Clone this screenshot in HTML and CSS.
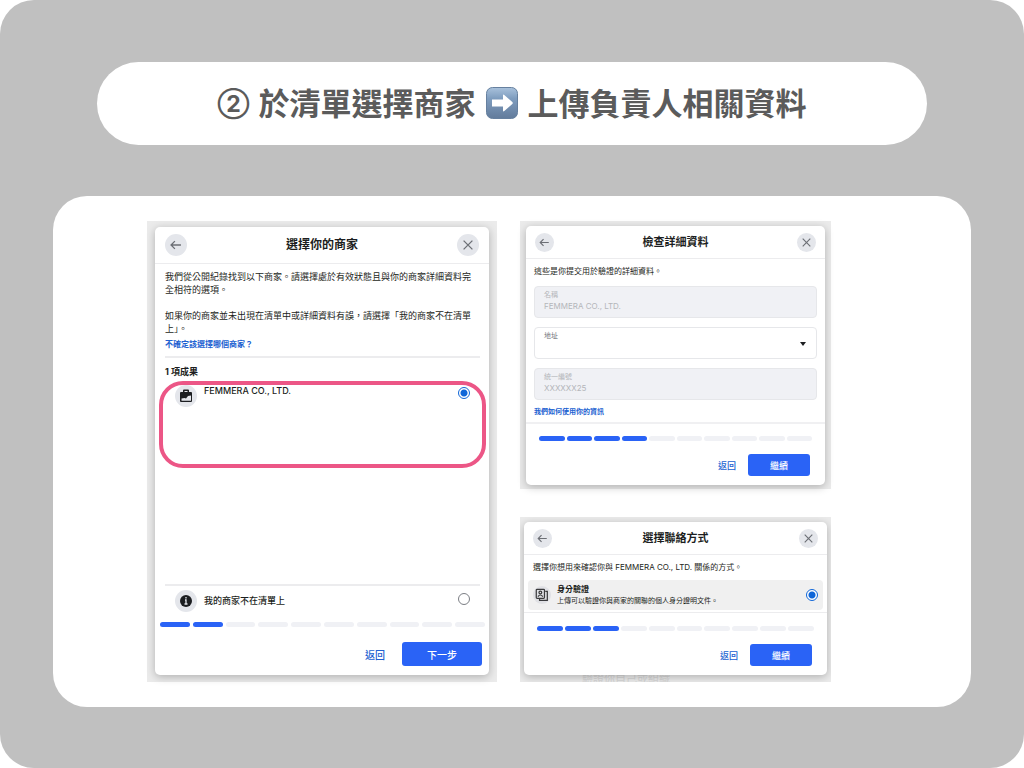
FILE: index.html
```
<!DOCTYPE html>
<html lang="zh-Hant">
<head>
    <meta charset="UTF-8">
    <meta name="viewport" content="width=device-width, initial-scale=1.0">
    <title>於清單選擇商家</title>
    <link rel="stylesheet" href="styles.css">
</head>
<body>
    <main class="slide">
        <h1 class="title">
            <span class="number">②</span> 於清單選擇商家
            <svg class="arrow" viewBox="0 0 32 32" aria-hidden="true">
                <defs>
                    <linearGradient id="blue" x1="0" y1="0" x2="0" y2="1">
                        <stop offset="0" stop-color="#a9c2dc"/>
                        <stop offset="0.35" stop-color="#7f9dbf"/>
                        <stop offset="1" stop-color="#627b9b"/>
                    </linearGradient>
                </defs>
                <rect x="0.5" y="0.5" width="31" height="31" rx="6" fill="url(#blue)" stroke="#66809f"/>
                <path d="M6 12.5h11V8.500q0-1.500 1.300-.5l8 7q1 1 0 2l-8 7q-1.300 1-1.300-.5v-4H6z" fill="#fff"/>
            </svg>
            上傳負責人相關資料
        </h1>

        <div class="board">
            <div class="shot shot-list">
                <form class="dialog">
                    <header class="dialog-head">
                        <button type="button" class="round" aria-label="返回">
                            <svg viewBox="0 0 20 20"><path d="M14.500 10H6M9 6.500L5.500 10 9 13.500"/></svg>
                        </button>
                        <h2>選擇你的商家</h2>
                        <button type="button" class="round" aria-label="關閉">
                            <svg viewBox="0 0 20 20"><path d="M6 6l8 8M14 6l-8 8"/></svg>
                        </button>
                    </header>
                    <div class="list-body">
                        <p>我們從公開紀錄找到以下商家。請選擇處於有效狀態且與你的商家詳細資料完全相符的選項。</p>
                        <p>如果你的商家並未出現在清單中或詳細資料有誤，請選擇「我的商家不在清單上」。</p>
                        <a class="help" href="#">不確定該選擇哪個商家？</a>
                        <h3>1 項成果</h3>
                        <div class="option picked">
                            <span class="badge">
                                <svg viewBox="0 0 22 22">
                                    <path d="M8 7V5.5Q8 4.500 9 4.500h4q1 0 1 1V7h2q1 0 1 1v8q0 1-1 1H6q-1 0-1-1V8q0-1 1-1zM9.500 7h3V6h-3z" fill="#1c1e21" fill-rule="evenodd"/>
                                    <path d="M6.500 15.800v-2.300l3-.5 1.500.5 2-2.500 3-.5v5.300z" fill="#e4e6eb"/>
                                </svg>
                            </span>
                            <label for="femmera">FEMMERA CO., LTD.</label>
                            <input type="radio" id="femmera" name="business" checked>
                        </div>
                        <div class="option unlisted">
                            <span class="badge">
                                <svg viewBox="0 0 22 22">
                                    <circle cx="11" cy="11" r="6" fill="#1c1e21"/>
                                    <path d="M11 7v1.500M10 10h1v4M9.500 14h3" fill="none" stroke="#e4e6eb" stroke-width="1.300"/>
                                </svg>
                            </span>
                            <label for="unlisted">我的商家不在清單上</label>
                            <input type="radio" id="unlisted" name="business">
                        </div>
                    </div>
                    <div class="steps">
                        <i class="done"></i><i class="done"></i><i></i><i></i><i></i><i></i><i></i><i></i><i></i><i></i>
                    </div>
                    <footer class="actions">
                        <button type="button" class="back">返回</button>
                        <button type="button" class="next">下一步</button>
                    </footer>
                </form>
            </div>

            <div class="side">
                <div class="shot shot-details">
                    <form class="dialog">
                        <header class="dialog-head">
                            <button type="button" class="round" aria-label="返回">
                                <svg viewBox="0 0 20 20"><path d="M14.500 10H6M9 6.500L5.500 10 9 13.500"/></svg>
                            </button>
                            <h2>檢查詳細資料</h2>
                            <button type="button" class="round" aria-label="關閉">
                                <svg viewBox="0 0 20 20"><path d="M6 6l8 8M14 6l-8 8"/></svg>
                            </button>
                        </header>
                        <div class="details-body">
                            <p>這些是你提交用於驗證的詳細資料。</p>
                            <div class="field locked">
                                <label for="name">名稱</label>
                                <input type="text" id="name" value="FEMMERA CO., LTD." disabled>
                            </div>
                            <div class="field">
                                <label for="address">地址</label>
                                <select id="address">
                                    <option></option>
                                </select>
                            </div>
                            <div class="field locked">
                                <label for="taxid">統一編號</label>
                                <input type="text" id="taxid" value="XXXXXX25" disabled>
                            </div>
                            <a href="#">我們如何使用你的資訊</a>
                        </div>
                        <div class="steps">
                            <i class="done"></i><i class="done"></i><i class="done"></i><i class="done"></i><i></i><i></i><i></i><i></i><i></i><i></i>
                        </div>
                        <footer class="actions">
                            <button type="button" class="back">返回</button>
                            <button type="button" class="next">繼續</button>
                        </footer>
                    </form>
                </div>

                <div class="shot shot-contact">
                    <form class="dialog">
                        <header class="dialog-head">
                            <button type="button" class="round" aria-label="返回">
                                <svg viewBox="0 0 20 20"><path d="M14.500 10H6M9 6.500L5.500 10 9 13.500"/></svg>
                            </button>
                            <h2>選擇聯絡方式</h2>
                            <button type="button" class="round" aria-label="關閉">
                                <svg viewBox="0 0 20 20"><path d="M6 6l8 8M14 6l-8 8"/></svg>
                            </button>
                        </header>
                        <div class="contact-body">
                            <p>選擇你想用來確認你與 FEMMERA CO., LTD. 關係的方式。</p>
                            <div class="option method">
                                <span class="badge">
                                    <svg viewBox="0 0 22 22" fill="none" stroke="#3a3b3d" stroke-width="1.500">
                                        <rect x="4" y="4" width="10" height="11" rx="1"/>
                                        <path d="M15 6.500h2.500v11H8V16"/>
                                        <circle cx="9" cy="8" r="1.700"/>
                                        <path d="M6 13q3-4 6 0"/>
                                    </svg>
                                </span>
                                <label for="identity"><b>身分驗證</b>上傳可以驗證你與商家的關聯的個人身分證明文件。</label>
                                <input type="radio" id="identity" name="method" checked>
                            </div>
                        </div>
                        <div class="steps">
                            <i class="done"></i><i class="done"></i><i class="done"></i><i></i><i></i><i></i><i></i><i></i><i></i><i></i>
                        </div>
                        <footer class="actions">
                            <button type="button" class="back">返回</button>
                            <button type="button" class="next">繼續</button>
                        </footer>
                    </form>
                    <span class="behind">驗證你自己或組織</span>
                </div>
            </div>
        </div>
    </main>
</body>
</html>
```
FILE: styles.css
```
* {
    box-sizing: border-box;
}
body {
    margin: 0;
    background-color: white;
    color: #1c1e21;
    font-family: Inter, "Noto Sans CJK TC", sans-serif;
}
h1, h2, h3, p {
    margin: 0;
}
button, input, select {
    font-family: inherit;
    margin: 0;
    padding: 0;
    border: none;
}
a {
    color: #2161d1;
    font-weight: bold;
    text-decoration: none;
}

/* slide */
.slide {
    min-height: 100vh;
    padding: 62px 53px 61px;
    border-radius: 34px;
    background-color: #c0c0c0;
    display: flex;
    flex-direction: column;
}
.title {
    margin: 0 44px 51px;
    padding: 17px 0 20px;
    border-radius: 42px;
    background-color: white;
    color: #5b5b5b;
    font-family: "Noto Sans CJK TC", sans-serif;
    font-size: 31px;
    line-height: 46px;
    text-align: center;
}
.number {
    margin-right: 2px;
    font-family: Inter, "Noto Sans CJK TC", sans-serif;
    font-size: 23px;
    line-height: 24px;
    vertical-align: 3px;
}
.arrow {
    width: 32px;
    height: 32px;
    margin: 0 3px;
    vertical-align: -4px;
}
.board {
    flex: 1;
    padding: 25px 140px 25px 94px;
    border-radius: 34px;
    background-color: white;
    display: grid;
    grid-template-columns: 350fr 311fr;
    gap: 23px;
}
.side {
    display: flex;
    flex-direction: column;
    justify-content: space-between;
    gap: 28px;
}

/* dialogs */
.shot {
    display: flex;
    background-color: #ebebeb;
}
.shot-list {
    padding: 6px 8px 7px;
}
.shot-details {
    padding: 5px 6px 4px;
}
.shot-contact {
    position: relative;
    overflow: hidden;
    padding: 5px 4px 7px;
}
.dialog {
    flex: 1;
    display: flex;
    flex-direction: column;
    border-radius: 5px;
    background-color: white;
    box-shadow: 0 2px 8px rgba(0, 0, 0, 0.25);
    z-index: 1;
}
.dialog-head {
    display: flex;
    justify-content: space-between;
    align-items: center;
    height: 33px;
    padding: 0 9px;
    border-bottom: 1px solid #ececee;
}
.dialog-head h2 {
    font-size: 11px;
    line-height: 16px;
}
.shot-list .dialog-head {
    height: 37px;
    padding: 0 10px;
}
.shot-list .dialog-head h2 {
    font-size: 12px;
}
.round {
    width: 19px;
    height: 19px;
    border-radius: 50%;
    background-color: #e4e6eb;
}
.shot-list .round {
    width: 22px;
    height: 22px;
}
.round svg {
    display: block;
    width: 100%;
    fill: none;
    stroke: #6c6f75;
    stroke-width: 1.2;
}
p {
    font-size: 8px;
    line-height: 12px;
}

/* options */
.option {
    display: flex;
    align-items: center;
}
.option label {
    flex: 1;
}
.badge {
    width: 22px;
    height: 22px;
    margin-right: 7px;
    border-radius: 50%;
    background-color: #e4e6eb;
}
.badge svg {
    display: block;
}
input[type="radio"] {
    appearance: none;
    width: 12px;
    height: 12px;
    border: 1px solid #7b7e84;
    border-radius: 50%;
    background-color: white;
}
input[type="radio"]:checked {
    border-color: #0f66d8;
    background: radial-gradient(circle, #0f66d8 3px, white 4px);
}

/* business list */
.list-body {
    flex: 1;
    display: flex;
    flex-direction: column;
    padding: 6px 9px 10px 10px;
}
.list-body p {
    margin: 0 3px 13px 0;
    font-size: 9px;
    line-height: 13px;
}
.help {
    margin-top: -10px;
    padding-bottom: 6px;
    border-bottom: 2px solid #ececee;
    font-size: 8px;
    line-height: 12px;
}
.list-body h3 {
    margin: 8px 0 3px;
    font-size: 9px;
    line-height: 12px;
}
.list-body label {
    font-size: 9px;
    font-weight: 500;
    line-height: 12px;
}
.picked {
    min-height: 87px;
    margin: 0 -6px;
    padding: 0 12px;
    border: 4px solid #ec5686;
    border-radius: 24px;
    align-items: flex-start;
}
.picked input[type="radio"] {
    margin-top: 2px;
}
.unlisted {
    margin-top: auto;
    padding: 4px 10px 0;
    border-top: 2px solid #ececee;
}
.unlisted input[type="radio"] {
    margin-bottom: 4px;
}

/* details form */
.details-body {
    padding: 6px 8px 4px;
    border-bottom: 2px solid #f0f0f2;
}
.details-body p {
    margin-bottom: 9px;
}
.details-body a {
    display: block;
    font-size: 7px;
    line-height: 12px;
}
.field {
    height: 32px;
    margin-bottom: 9px;
    padding: 3px 9px;
    border: 1px solid #e6e7ea;
    border-radius: 4px;
    display: flex;
    flex-direction: column;
    position: relative;
}
.field:last-of-type {
    margin-bottom: 6px;
}
.field label {
    color: #6f7278;
    font-size: 7px;
    line-height: 10px;
}
.field input {
    height: 12px;
    background: none;
    color: #b4b6ba;
    font-size: 8px;
}
.field select {
    position: absolute;
    inset: 0;
    appearance: none;
    background: none;
}
.field:not(.locked)::after {
    content: "";
    position: absolute;
    right: 10px;
    top: 14px;
    border: 3px solid transparent;
    border-top: 4px solid #1c1e21;
}
.locked {
    background-color: #f0f1f5;
}
.locked label {
    color: #b4b6ba;
}

/* contact method */
.contact-body {
    padding: 6px 4px 2px;
    border-bottom: 1px solid #ececee;
}
.contact-body p {
    margin: 0 5px 7px;
}
.method {
    height: 30px;
    padding: 0 5px;
    border-radius: 4px;
    background-color: #f0f0f0;
}
.method .badge {
    width: 18px;
    height: 18px;
    margin-right: 6px;
    background-color: #e0e1e5;
}
.method label {
    font-size: 7px;
    line-height: 11px;
}
.method b {
    display: block;
    font-size: 8px;
}

/* progress and buttons */
.steps {
    display: flex;
    gap: 2px;
    margin: 13px;
}
.shot-list .steps {
    gap: 3px;
    margin: 0 4px 15px 5px;
}
.shot-details .steps {
    margin-top: 12px;
}
.steps i {
    flex: 1;
    height: 5px;
    border-radius: 3px;
    background-color: #f0f1f5;
}
.steps .done {
    background-color: #2a63f6;
}
.actions {
    display: flex;
    justify-content: flex-end;
    gap: 12px;
    padding: 0 15px 9px;
}
.shot-list .actions {
    gap: 17px;
    padding: 0 7px 9px;
}
.back {
    background: none;
    color: #2161d1;
    font-size: 9px;
    font-weight: 500;
}
.next {
    width: 62px;
    height: 22px;
    border-radius: 3px;
    background-color: #2a63f6;
    color: white;
    font-size: 9px;
    font-weight: 500;
}
.shot-list .next {
    width: 80px;
    height: 24px;
}
.shot-list .back, .shot-list .next {
    font-size: 10px;
}

/* text of the page under the dialog */
.behind {
    position: absolute;
    left: 62px;
    bottom: -4px;
    color: #d6d6d6;
    font-size: 11px;
    line-height: 14px;
}
```
